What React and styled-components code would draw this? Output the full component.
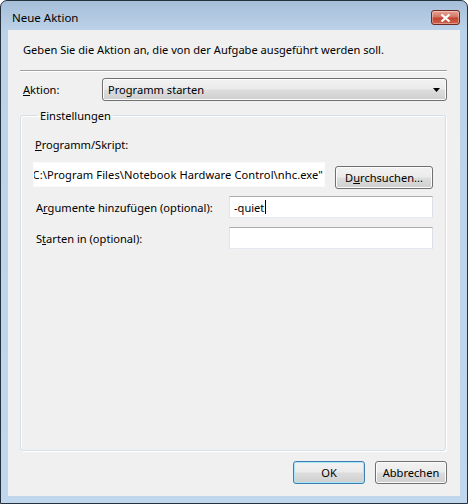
import React from "react";
import styled, { createGlobalStyle } from "styled-components";

const Global = createGlobalStyle`
  html, body { margin: 0; padding: 0; background: #fff; }
  body { font-family: "Noto Sans", "Open Sans", sans-serif; font-size: 11.1px; color: #000; }
`;

const Window = styled.div`
  width: 468px;
  height: 504px;
  box-sizing: border-box;
  border: 1px solid #25313d;
  border-radius: 7px 7px 0 0;
  background: linear-gradient(180deg, #a6bfd9 0px, #bcd2e8 30px, #c0d7ed 100%);
  display: flex;
  flex-direction: column;
  overflow: hidden;
`;

const TitleBar = styled.div`
  height: 29px;
  display: flex;
  align-items: flex-start;
  justify-content: space-between;
  padding: 0 7px 0 11px;
`;

const Title = styled.span`
  margin-top: 9px;
  font-size: 11.5px;
  color: #000;
`;

const CloseButton = styled.div`
  margin-top: 9px;
  width: 29px;
  height: 15px;
  box-sizing: border-box;
  border: 1px solid #6c2a22;
  border-radius: 3px;
  background: linear-gradient(180deg, #e8a493 0%, #d47763 45%, #c14530 55%, #d0634c 100%);
  display: flex;
  align-items: center;
  justify-content: center;
  box-shadow: inset 0 0 0 1px rgba(255,255,255,0.35);
`;

const Client = styled.div`
  flex: 1;
  margin: 0 7px 7px;
  background: #f0f0f0;
  display: flex;
  flex-direction: column;
  padding: 10px 13px 12px 12px;
`;

const Instruction = styled.div`
  padding-left: 3px;
  height: 20px;
  line-height: 20px;
`;

const Separator = styled.div`
  margin-top: 10px;
  height: 1px;
  background: #a0a0a0;
  border-bottom: 1px solid #fff;
`;

const Row = styled.div`
  display: flex;
  align-items: ${p => p.top ? "flex-start" : "center"};
  margin-top: ${p => p.mt || 0}px;
`;

const Label = styled.span`
  width: ${p => p.w || 79}px;
  padding-left: 3px;
  flex-shrink: 0;
  u { text-decoration: underline; }
`;

const Combo = styled.div`
  flex: 1;
  height: 23px;
  box-sizing: border-box;
  border: 1px solid #707070;
  border-radius: 3px;
  background: linear-gradient(180deg, #f2f2f2 0%, #ebebeb 48%, #dddddd 52%, #cfcfcf 100%);
  box-shadow: inset 0 0 0 1px #fcfcfc;
  display: flex;
  align-items: center;
  justify-content: space-between;
  padding: 0 6px 0 5px;
`;

const Group = styled.fieldset`
  margin: 7px 1px 0 0;
  padding: 13px 12px 0 12px;
  border: 1px solid #d5dfe5;
  border-radius: 3px;
  box-shadow: inset 1px 1px 0 #fff, 1px 1px 0 #fff;
  height: 343px;
  box-sizing: border-box;
  display: flex;
  flex-direction: column;
`;

const Legend = styled.legend`
  padding: 0 2px;
  margin-left: 5px;
`;

const FieldLabel = styled.div`
  padding-left: 2px;
  height: 18px;
  line-height: 18px;
`;

const Input = styled.div`
  height: ${p => p.h || 22}px;
  box-sizing: border-box;
  background: #fff;
  border: 1px solid;
  border-color: ${p => (p.flat ? "#fbfbfb" : "#abadb3 #dbdfe6 #e3e9ef #e2e3ea")};
  display: flex;
  align-items: center;
  justify-content: ${p => p.scrolled ? "flex-end" : "flex-start"};
  padding: 0 ${p => p.scrolled ? 1 : 0}px 0 4px;
  white-space: nowrap;
  overflow: hidden;
  flex: ${p => p.grow ? 1 : "none"};
  width: ${p => p.w ? p.w + "px" : "auto"};
`;

const ScrolledText = styled.span`
  flex-shrink: 0;
  letter-spacing: 0.1px;
`;

const Caret = styled.span`
  display: inline-block;
  width: 1px;
  height: 14px;
  background: #000;
  margin-left: 1px;
`;

const Button = styled.div`
  width: ${p => p.w}px;
  height: 23px;
  box-sizing: border-box;
  margin-left: ${p => p.ml || 0}px;
  margin-top: ${p => p.mt || 0}px;
  border: 1px solid ${p => (p.primary ? "#3c7fb1" : "#707070")};
  border-radius: 3px;
  background: linear-gradient(180deg, #f2f2f2 0%, #ebebeb 48%, #dddddd 52%, #cfcfcf 100%);
  box-shadow: inset 0 0 0 1px ${p => (p.primary ? "#a9e5f9" : "#fcfcfc")};
  display: flex;
  align-items: center;
  justify-content: center;
  flex-shrink: 0;
`;

const Footer = styled.div`
  margin-top: auto;
  display: flex;
  justify-content: flex-end;
  gap: 10px;
`;

export default function App() {
  return (
    <>
      <Global />
      <Window>
        <TitleBar>
          <Title>Neue Aktion</Title>
          <CloseButton>
            <svg width="11" height="8" viewBox="0 0 11 8">
              <path d="M1.5 0.5 L9.5 7.5 M9.5 0.5 L1.5 7.5" stroke="#fff" strokeWidth="2.2" />
            </svg>
          </CloseButton>
        </TitleBar>
        <Client>
          <Instruction>Geben Sie die Aktion an, die von der Aufgabe ausgeführt werden soll.</Instruction>
          <Separator />
          <Row mt={6}>
            <Label><u>A</u>ktion:</Label>
            <Combo>
              <span>Programm starten</span>
              <svg width="7" height="4" viewBox="0 0 7 4"><path d="M0 0 H7 L3.5 4 Z" fill="#000" /></svg>
            </Combo>
          </Row>
          <Group>
            <Legend>Einstellungen</Legend>
            <FieldLabel><u>P</u>rogramm/Skript:</FieldLabel>
            <Row top mt={8}>
              <Input flat scrolled h={25} w={292}>
                <ScrolledText>"C:\Program Files\Notebook Hardware Control\nhc.exe"</ScrolledText>
              </Input>
              <Button w={98} ml={10} mt={4}>D<u>u</u>rchsuchen...</Button>
            </Row>
            <Row mt={7}>
              <Label w={193}>A<u>r</u>gumente hinzufügen (optional):</Label>
              <Input grow>-quiet<Caret /></Input>
            </Row>
            <Row mt={9}>
              <Label w={193}>S<u>t</u>arten in (optional):</Label>
              <Input grow />
            </Row>
          </Group>
          <Footer>
            <Button primary w={72}>OK</Button>
            <Button w={72}>Abbrechen</Button>
          </Footer>
        </Client>
      </Window>
    </>
  );
}
